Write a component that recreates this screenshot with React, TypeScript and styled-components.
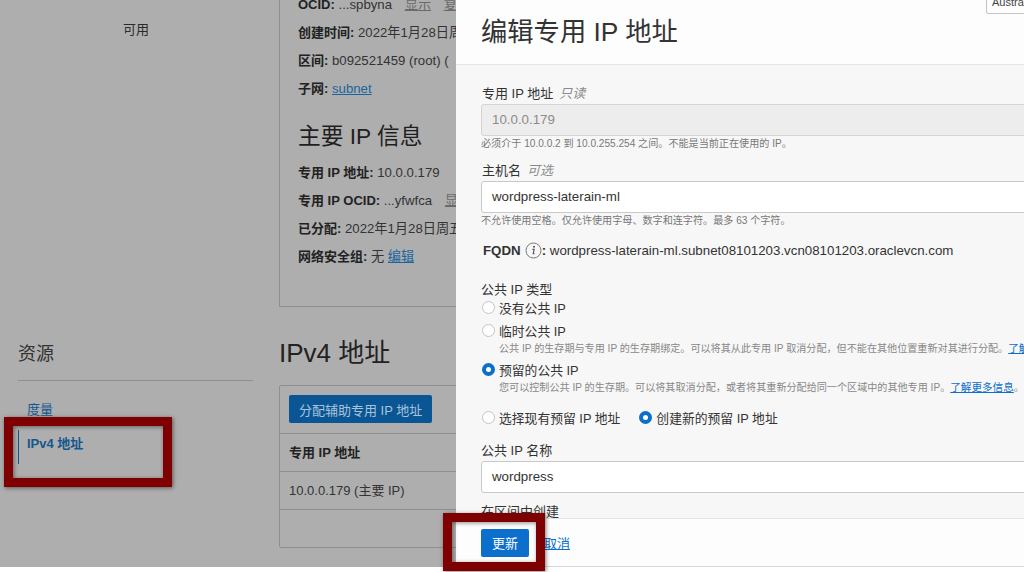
import React from 'react';
import styled, { createGlobalStyle } from 'styled-components';

const FONT = `"Liberation Sans", "Noto Sans CJK SC", sans-serif`;

const GlobalStyle = createGlobalStyle`
  html, body {
    margin: 0;
    padding: 0;
    background: #ffffff;
  }
  body {
    font-family: ${FONT};
    font-size: 13px;
    color: #2c2c2c;
  }
  * {
    box-sizing: border-box;
  }
`;

const Screen = styled.div`
  position: relative;
  width: 1024px;
  height: 572px;
  overflow: hidden;
  background: #ffffff;
`;

/* Dimmed console page behind the drawer */
const Backdrop = styled.div`
  height: 567px;
  background: #aeaeae;
  color: #222;
  overflow: hidden;
`;

const TopSection = styled.section`
  display: flex;
  height: 307px;
`;

const StatusColumn = styled.div`
  width: 279px;
  padding-top: 22px;
  padding-right: 7px;
  text-align: center;
  font-size: 13px;
  line-height: 16px;
  color: #2a2a2a;
`;

const DetailsColumn = styled.div`
  flex: 1;
  margin-top: -9px;
  padding-left: 18px;
  border-left: 1px solid #8f8f8f;
  border-bottom: 1px solid #8f8f8f;
`;

const DetailRow = styled.div`
  height: 28px;
  line-height: 28px;
  font-size: 13.2px;
  white-space: nowrap;
  color: #333;
`;

const Key = styled.b`
  font-size: 13px;
  color: #222;
`;

const Link = styled.a`
  color: #1a659f;
  text-decoration: underline;
`;

const Action = styled.span`
  color: #6a6a6a;
  text-decoration: underline;
  margin-left: 9px;
`;

const SubHeading = styled.h2`
  margin: 0;
  height: 56px;
  padding-top: 15px;
  font-size: 22.7px;
  line-height: 36px;
  font-weight: 400;
  color: #1f1f1f;
`;

const ResourceSection = styled.section`
  display: flex;
`;

const ResourceNav = styled.nav`
  width: 279px;
  padding: 29px 26px 0 18px;
`;

const NavTitle = styled.h3`
  margin: 0;
  height: 45px;
  font-size: 18px;
  line-height: 36px;
  font-weight: 400;
  color: #333;
  border-bottom: 1px solid #8f8f8f;
`;

const NavList = styled.div`
  padding-top: 17px;
`;

const NavItem = styled.div<{ $active?: boolean }>`
  height: ${(p) => (p.$active ? '34px' : '32px')};
  padding-left: 8px;
  line-height: ${(p) => (p.$active ? '28px' : '24px')};
  font-size: 13px;
  font-weight: ${(p) => (p.$active ? 700 : 400)};
  color: #14578f;
  border-left: 1px solid ${(p) => (p.$active ? '#14578f' : 'transparent')};
`;

const ResourceMain = styled.div`
  flex: 1;
  padding-top: 28px;
`;

const ResourceTitle = styled.h2`
  margin: 0;
  height: 50px;
  font-size: 26px;
  line-height: 36px;
  font-weight: 400;
  color: #222;
`;

const TableCard = styled.div`
  height: 163px;
  border: 1px solid #8f8f8f;
  border-radius: 2px;
`;

const TableToolbar = styled.div`
  height: 48px;
  padding: 9px 9px 0;
  border-bottom: 1px solid #8f8f8f;
`;

const AssignButton = styled.button`
  height: 28px;
  padding: 0 10px;
  border: 0;
  border-radius: 2px;
  background: #0a5695;
  color: #a9c3d8;
  font: 13px ${FONT};
`;

const TableRow = styled.div<{ $head?: boolean }>`
  height: 38px;
  padding-left: 9px;
  line-height: 37px;
  font-size: 13px;
  font-weight: ${(p) => (p.$head ? 700 : 400)};
  color: ${(p) => (p.$head ? '#222' : '#333')};
  border-bottom: 1px solid #8f8f8f;
`;

/* Edit drawer */
const Drawer = styled.aside`
  position: absolute;
  top: 0;
  left: 456px;
  right: 0;
  height: 567px;
  display: flex;
  flex-direction: column;
  background: #f7f7f7;
`;

const DrawerHeader = styled.header`
  height: 65px;
  flex: none;
  padding: 13px 0 0 25px;
  background: #fdfdfd;
  border-bottom: 1px solid #e4e4e4;
`;

const DrawerTitle = styled.h1`
  margin: 0;
  font-size: 26.3px;
  line-height: 38px;
  font-weight: 400;
  color: #333;
`;

const DrawerBody = styled.div`
  flex: 1;
  min-height: 0;
  overflow: hidden;
  padding: 20px 0 0 25px;
`;

const Field = styled.div`
  margin-bottom: 10px;
`;

const Label = styled.div<{ $flush?: boolean; $tight?: boolean }>`
  height: ${(p) => (p.$tight ? '17px' : '19px')};
  padding-left: ${(p) => (p.$flush ? '0' : '1px')};
  line-height: 18px;
  font-size: 13px;
  color: #333;
`;

const Hint = styled.i`
  margin-left: 6px;
  color: #8a8a8a;
`;

const Input = styled.div<{ $disabled?: boolean }>`
  height: 32px;
  margin-right: -10px;
  padding-left: 10px;
  line-height: 30px;
  font-size: 13.3px;
  color: ${(p) => (p.$disabled ? '#8b8b8b' : '#333')};
  background: ${(p) => (p.$disabled ? '#ededed' : '#ffffff')};
  border: 1px solid ${(p) => (p.$disabled ? '#d4d4d4' : '#c9c9c9')};
  border-radius: 3px 0 0 3px;
`;

const HelpText = styled.div`
  height: 16px;
  line-height: 16px;
  font-size: 10.1px;
  color: #777;
  white-space: nowrap;
`;

const FqdnRow = styled.div`
  display: flex;
  align-items: center;
  height: 22px;
  margin: 9px 0 20px 2px;
  font-size: 13.3px;
  color: #333;
  white-space: nowrap;
`;

const InfoIcon = styled.svg`
  width: 17px;
  height: 17px;
  margin-left: 4px;
`;

const RadioGroup = styled.div`
  margin-bottom: 14px;
`;

const RadioOption = styled.div`
  margin-bottom: 5px;
`;

const RadioLine = styled.div`
  display: flex;
  align-items: center;
  height: 18px;
  gap: 4px;
  padding-left: 1px;
  font-size: 12.8px;
  color: #333;
  white-space: nowrap;
`;

const RadioDot = styled.span<{ $checked?: boolean }>`
  flex: none;
  width: 13px;
  height: 13px;
  border-radius: 50%;
  background: #ffffff;
  border: ${(p) => (p.$checked ? '4px solid #0b6fcb' : '1px solid #c4c4c4')};
`;

const RadioHelp = styled.div`
  height: 15px;
  margin: 2px 0 -1px 18px;
  line-height: 15px;
  font-size: 10.1px;
  color: #888;
  white-space: nowrap;
`;

const HelpLink = styled.a`
  font-size: 10.6px;
  color: #0b6fcb;
  text-decoration: underline;
`;

const InlineRadios = styled.div`
  display: flex;
  gap: 18px;
  margin-bottom: 16px;
`;

const DrawerFooter = styled.footer`
  height: 49px;
  flex: none;
  display: flex;
  align-items: center;
  gap: 15px;
  padding-left: 25px;
  background: #fdfdfd;
  border-top: 1px solid #e4e4e4;
  border-bottom: 1px solid #d8d8d8;
`;

const PrimaryButton = styled.button`
  width: 48px;
  height: 28px;
  border: 0;
  border-radius: 2px;
  background: #0b6fcb;
  color: #ffffff;
  font: 13px ${FONT};
`;

const CancelLink = styled.a`
  font-size: 13px;
  color: #0b6fcb;
  text-decoration: underline;
`;

const RegionTip = styled.div`
  position: absolute;
  top: -8px;
  left: 986px;
  width: 60px;
  height: 22px;
  padding: 3px 0 0 5px;
  font-size: 11px;
  line-height: 12px;
  color: #444;
  background: #fdfdfd;
  border: 1px solid #c4c4c4;
  border-radius: 2px;
`;

/* Red annotation boxes drawn over the screenshot */
const Annotation = styled.div<{ $x: number; $y: number; $w: number; $h: number }>`
  position: absolute;
  left: ${(p) => p.$x}px;
  top: ${(p) => p.$y}px;
  width: ${(p) => p.$w}px;
  height: ${(p) => p.$h}px;
  border: 9px solid #7f0000;
  box-shadow: 1px 1px 4px rgba(0, 0, 0, 0.5), inset 1px 1px 4px rgba(0, 0, 0, 0.45);
`;

export default function App() {
  return (
    <Screen>
      <GlobalStyle />
      <Backdrop>
        <TopSection>
          <StatusColumn>可用</StatusColumn>
          <DetailsColumn>
            <DetailRow>
              <Key>OCID:</Key> ...spbyna <Action>显示</Action> <Action>复制</Action>
            </DetailRow>
            <DetailRow>
              <Key>创建时间:</Key> 2022年1月28日周五
            </DetailRow>
            <DetailRow>
              <Key>区间:</Key> b092521459 (root) (
            </DetailRow>
            <DetailRow>
              <Key>子网:</Key> <Link>subnet</Link>
            </DetailRow>
            <SubHeading>主要 IP 信息</SubHeading>
            <DetailRow>
              <Key>专用 IP 地址:</Key> 10.0.0.179
            </DetailRow>
            <DetailRow>
              <Key>专用 IP OCID:</Key> ...yfwfca <Action>显示</Action>
            </DetailRow>
            <DetailRow>
              <Key>已分配:</Key> 2022年1月28日周五
            </DetailRow>
            <DetailRow>
              <Key>网络安全组:</Key> 无 <Link>编辑</Link>
            </DetailRow>
          </DetailsColumn>
        </TopSection>
        <ResourceSection>
          <ResourceNav>
            <NavTitle>资源</NavTitle>
            <NavList>
              <NavItem>度量</NavItem>
              <NavItem $active>IPv4 地址</NavItem>
            </NavList>
          </ResourceNav>
          <ResourceMain>
            <ResourceTitle>IPv4 地址</ResourceTitle>
            <TableCard>
              <TableToolbar>
                <AssignButton>分配辅助专用 IP 地址</AssignButton>
              </TableToolbar>
              <TableRow $head>专用 IP 地址</TableRow>
              <TableRow>10.0.0.179 (主要 IP)</TableRow>
            </TableCard>
          </ResourceMain>
        </ResourceSection>
      </Backdrop>

      <Drawer>
        <DrawerHeader>
          <DrawerTitle>编辑专用 IP 地址</DrawerTitle>
        </DrawerHeader>
        <DrawerBody>
          <Field>
            <Label>
              专用 IP 地址<Hint>只读</Hint>
            </Label>
            <Input $disabled>10.0.0.179</Input>
            <HelpText>必须介于 10.0.0.2 到 10.0.255.254 之间。不能是当前正在使用的 IP。</HelpText>
          </Field>
          <Field>
            <Label>
              主机名<Hint>可选</Hint>
            </Label>
            <Input>wordpress-laterain-ml</Input>
            <HelpText>不允许使用空格。仅允许使用字母、数字和连字符。最多 63 个字符。</HelpText>
          </Field>
          <FqdnRow>
            <b>FQDN</b>
            <InfoIcon viewBox="0 0 17 17">
              <circle cx="8.5" cy="8.5" r="7.5" fill="none" stroke="#777" strokeWidth="1" />
              <circle cx="9" cy="4.8" r="1" fill="#555" />
              <path d="M7.4 7.4h1.8l-1 4.4h1.4" fill="none" stroke="#555" strokeWidth="1.1" />
            </InfoIcon>
            <b>:</b>&nbsp;wordpress-laterain-ml.subnet08101203.vcn08101203.oraclevcn.com
          </FqdnRow>
          <RadioGroup>
            <Label $flush $tight>公共 IP 类型</Label>
            <RadioOption>
              <RadioLine>
                <RadioDot />
                没有公共 IP
              </RadioLine>
            </RadioOption>
            <RadioOption>
              <RadioLine>
                <RadioDot />
                临时公共 IP
              </RadioLine>
              <RadioHelp>
                公共 IP 的生存期与专用 IP 的生存期绑定。可以将其从此专用 IP 取消分配，但不能在其他位置重新对其进行分配。
                <HelpLink>了解更多信息</HelpLink>
              </RadioHelp>
            </RadioOption>
            <RadioOption>
              <RadioLine>
                <RadioDot $checked />
                预留的公共 IP
              </RadioLine>
              <RadioHelp>
                您可以控制公共 IP 的生存期。可以将其取消分配，或者将其重新分配给同一个区域中的其他专用 IP。
                <HelpLink>了解更多信息</HelpLink>。
              </RadioHelp>
            </RadioOption>
          </RadioGroup>
          <InlineRadios>
            <RadioLine>
              <RadioDot />
              选择现有预留 IP 地址
            </RadioLine>
            <RadioLine>
              <RadioDot $checked />
              创建新的预留 IP 地址
            </RadioLine>
          </InlineRadios>
          <Field>
            <Label $flush>公共 IP 名称</Label>
            <Input>wordpress</Input>
          </Field>
          <Label $flush $tight>在区间中创建</Label>
        </DrawerBody>
        <DrawerFooter>
          <PrimaryButton>更新</PrimaryButton>
          <CancelLink>取消</CancelLink>
        </DrawerFooter>
      </Drawer>

      <RegionTip>Australia</RegionTip>
      <Annotation $x={4} $y={417} $w={168} $h={70} />
      <Annotation $x={443} $y={513} $w={102} $h={58} />
    </Screen>
  );
}
